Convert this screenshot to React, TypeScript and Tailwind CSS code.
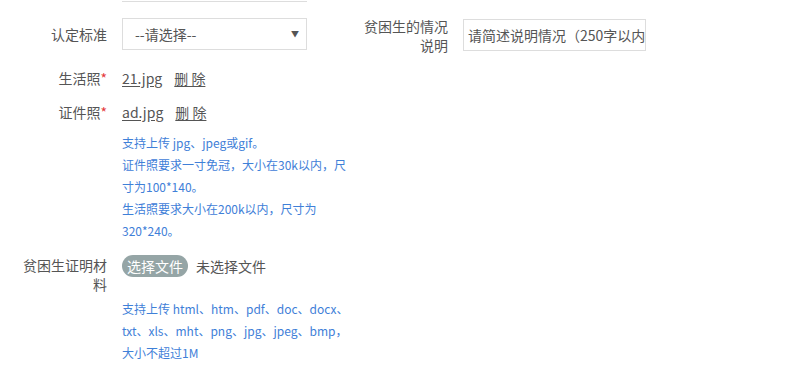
import React from "react";

const font = { fontFamily: '"Noto Sans CJK SC", "Noto Sans", sans-serif' };

function Label({ children, req }: { children: React.ReactNode; req?: boolean }) {
  return (
    <div className="w-[90px] shrink-0 text-right text-[14px] leading-[19px] text-[#555]">
      {children}
      {req && <span className="text-[#e4393c]">*</span>}
    </div>
  );
}

export default function App() {
  return (
    <div className="w-[787px] h-[373px] bg-white text-[#555] overflow-hidden" style={font}>
      <div className="ml-[122px] w-[185px] h-[2px] border-b border-[#ddd]" />
      {/* Row: 认定标准 + 情况说明 */}
      <div className="flex items-start mt-[16px] pl-[17px]">
        <div className="flex items-center gap-[15px]">
          <Label>认定标准</Label>
          <div className="w-[185px] h-[32px] border border-[#ddd] flex items-center justify-between pl-[12px] pr-[7px] text-[14px]">
            <span>--请选择--</span>
            <span className="text-[8px] text-[#555]">▼</span>
          </div>
        </div>
        <div className="flex items-start gap-[15px] ml-[51px] -mt-[1px]">
          <Label>贫困生的情况说明</Label>
          <div className="w-[183px] h-[32px] mt-[2px] border border-[#ddd] flex items-center pl-[4px] text-[14px] overflow-hidden whitespace-nowrap">
            请简述说明情况（250字以内）
          </div>
        </div>
      </div>
      {/* 生活照 */}
      <div className="flex items-center gap-[15px] pl-[17px] mt-[13px] h-[20px]">
        <Label req>生活照</Label>
        <div className="flex gap-[12px] text-[14px]">
          <span className="underline underline-offset-2">21.jpg</span>
          <span className="underline underline-offset-2">删 除</span>
        </div>
      </div>
      {/* 证件照 */}
      <div className="flex items-center gap-[15px] pl-[17px] mt-[14px] h-[20px]">
        <Label req>证件照</Label>
        <div className="flex gap-[12px] text-[14px]">
          <span className="underline underline-offset-2">ad.jpg</span>
          <span className="underline underline-offset-2">删 除</span>
        </div>
      </div>
      <div className="ml-[122px] mt-[10px] w-[235px] text-[12px] leading-[22px] text-[#3f80d8]">
        <div>支持上传 jpg、jpeg或gif。</div>
        <div>证件照要求一寸免冠，大小在30k以内，尺寸为100*140。</div>
        <div>生活照要求大小在200k以内，尺寸为320*240。</div>
      </div>
      {/* 证明材料 */}
      <div className="flex items-start gap-[15px] pl-[17px] mt-[14px]">
        <Label>贫困生证明材料</Label>
        <div className="flex items-center gap-[8px] text-[14px] -mt-[1px]">
          <span className="h-[22px] px-[5px] rounded-full bg-[#95a5a6] text-white flex items-center">选择文件</span>
          <span>未选择文件</span>
        </div>
      </div>
      <div className="ml-[122px] mt-[4px] w-[235px] text-[12px] leading-[22px] text-[#3f80d8]">
        <div>支持上传 html、htm、pdf、doc、docx、txt、xls、mht、png、jpg、jpeg、bmp，大小不超过1M</div>
      </div>
    </div>
  );
}
